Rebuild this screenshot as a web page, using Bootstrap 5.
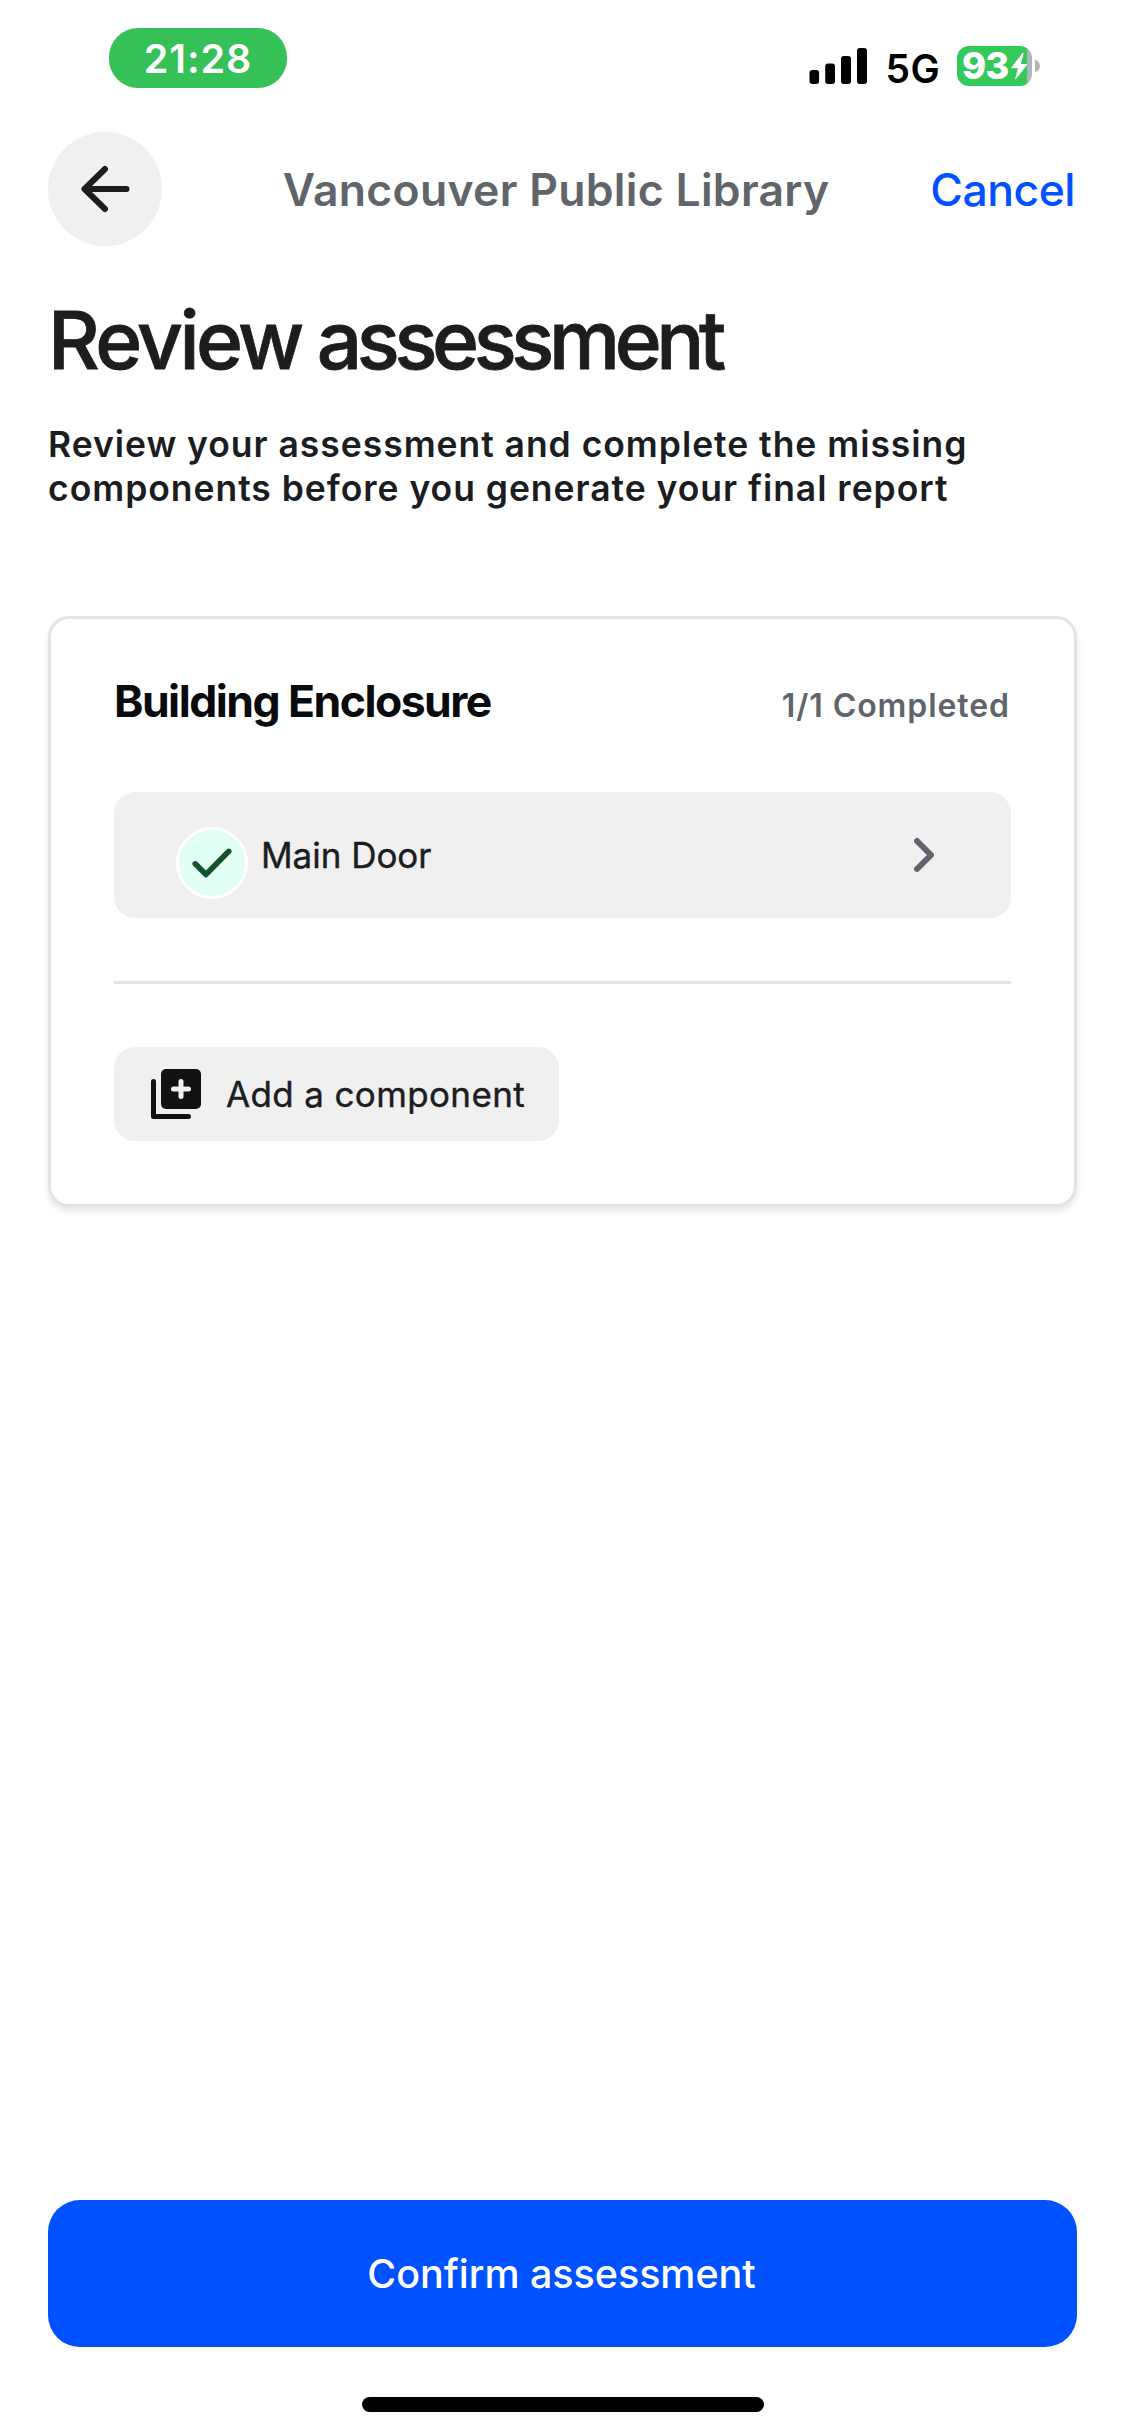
<!DOCTYPE html>
<html lang="en">
<head>
<meta charset="utf-8">
<meta name="viewport" content="width=device-width, initial-scale=1">
<title>Review assessment</title>
<link href="https://cdn.jsdelivr.net/npm/bootstrap@5.3.0/dist/css/bootstrap.min.css" rel="stylesheet">
<style>
  body { font-family: Inter, "Liberation Sans", sans-serif; color: #1b1d1f; background: #fff; font-size: 35px; }
  svg { display: block; flex: none; }
  .screen { width: 1125px; height: 2436px; padding: 0 48px; overflow: hidden; }

  .status-bar { height: 132px; padding: 28px 37px 0 61px; }
  .time-pill { width: 178px; height: 60px; border-radius: 29px; background: #35c058; color: #fff;
    font-size: 39.5px; font-weight: 600; letter-spacing: .9px; line-height: 62px; }
  .signals { height: 40px; margin-top: 18px; }
  .network { font-size: 39px; font-weight: 600; letter-spacing: .4px; line-height: 40px; color: #000; margin: 3px 17px 0 18px; }
  .battery { width: 75px; height: 40px; border-radius: 12px;
    background: linear-gradient(90deg, #34c95b 70px, #b4b4b6 70px); padding-left: 5px; }
  .battery-level { font-size: 36.5px; font-weight: 800; letter-spacing: -1px; line-height: 41px; color: #fff; width: 48px; }

  .top-bar { height: 114px; }
  .back-btn, .back-btn:hover { width: 114px; height: 114px; background: #f0f0f0; }
  .place { font-size: 44.5px; font-weight: 600; letter-spacing: .3px; line-height: 60px; color: #5f656b; margin: 1px 0 0 20px; }
  .cancel-link { font-size: 44.5px; font-weight: 500; letter-spacing: -.5px; line-height: 60px; color: #0051ff; margin: 1px 2px 0 0; }

  .page-title { font-size: 80px; font-weight: 500; letter-spacing: -5.4px; line-height: 96px; margin: 46px 0 0 0; -webkit-text-stroke: .8px #1b1d1f; }
  .page-title span { letter-spacing: -3.6px; }
  .intro { font-size: 35.5px; font-weight: 600; letter-spacing: .96px; line-height: 44px; margin: 35px 0 0 0; }

  .group-card { margin-top: 105px; height: 591px; border: 3px solid #e3e3e6; border-radius: 21px;
    padding: 54px 63px 0; box-shadow: 0 4px 6px rgba(0,0,0,.1); }
  .group-name { font-size: 44.5px; font-weight: 700; letter-spacing: -1.52px; line-height: 56px; color: #090a0b; }
  .group-count { font-size: 32px; font-weight: 600; letter-spacing: .92px; line-height: 40px; color: #5f656b; padding: 13px 1px 0 0; }
  .component-item { height: 126px; margin-top: 63px; border-radius: 21px; background: #f0f0f0; padding: 0 77px 0 62px; }
  .check-dot { width: 72px; height: 72px; border: 3px solid #fff; background: #e1fff4; margin-top: 16px; }
  .component-name { letter-spacing: -.02px; line-height: 44px; margin-left: 13px; -webkit-text-stroke: .4px #1b1d1f; }
  .rule { height: 3px; background: #e3e3e4; margin: 63px 0; }
  .add-btn, .add-btn:hover { width: 445px; height: 94px; border: 0; border-radius: 21px; background: #f0f0f0; color: #1b1d1f;
    font-size: 35px; letter-spacing: .36px; line-height: 44px; padding: 0 0 0 32px; -webkit-text-stroke: .4px #1b1d1f; }

  .confirm-btn, .confirm-btn:hover { height: 147px; border: 0; border-radius: 32px; background: #0051ff; color: #fff;
    font-size: 39.5px; font-weight: 500; letter-spacing: -.05px; padding: 2px 2px 0 0; }
  .home-bar { width: 402px; height: 15px; border-radius: 8px; background: #000; margin: 50px auto 24px; }
</style>
</head>
<body>
<div class="screen d-flex flex-column mx-auto">
  <div class="status-bar d-flex justify-content-between align-items-start">
    <div class="time-pill text-center">21:28</div>
    <div class="signals d-flex">
      <svg width="58" height="38" viewBox="0 0 58 38"><rect x="0.5" y="24" width="9.6" height="14" rx="3"/><rect x="16.2" y="17.5" width="9.8" height="20.5" rx="3"/><rect x="32" y="10" width="10" height="28" rx="3"/><rect x="48" y="2" width="10" height="36" rx="3"/></svg>
      <div class="network">5G</div>
      <div class="d-flex align-items-center">
        <div class="battery d-flex align-items-center">
          <div class="battery-level">93</div>
          <svg width="18" height="28" viewBox="0 0 18 28"><path d="M12.5 1 1.5 15.2q-.6 1 .6 1H8L5.2 26.6q0 1 .9.4L17 13q.6-1-.5-1H10.8L13.6 1.8Q13.6.4 12.500 1Z" fill="#fff"/></svg>
        </div>
        <svg width="8" height="14" viewBox="0 0 8 14"><path d="M3 0.500Q8 2.500 8 7T3 13.500Z" fill="#b4b4b6"/></svg>
      </div>
    </div>
  </div>

  <header class="top-bar d-flex align-items-center justify-content-between">
    <button class="back-btn btn rounded-circle border-0 p-0 d-flex align-items-center justify-content-center" aria-label="Back">
      <svg width="60" height="60" viewBox="0 0 60 60" fill="none" stroke="#1b1d1f" stroke-width="6" stroke-linecap="round" stroke-linejoin="round"><path d="M51.500 30H9.500M30 10 9.500 30 30 50"/></svg>
    </button>
    <div class="place">Vancouver Public Library</div>
    <a class="cancel-link text-decoration-none" href="#">Cancel</a>
  </header>

  <h1 class="page-title"><span>Review</span> assessment</h1>
  <p class="intro">Review your assessment and complete the missing<br>components before you generate your final report</p>

  <section class="card group-card">
    <div class="d-flex justify-content-between">
      <div class="group-name">Building Enclosure</div>
      <div class="group-count">1/1 Completed</div>
    </div>
    <div class="component-item d-flex align-items-center">
      <div class="check-dot rounded-circle d-flex align-items-center justify-content-center">
        <svg width="44" height="44" viewBox="0 0 44 44" fill="none" stroke="#15532e" stroke-width="5.500" stroke-linecap="round" stroke-linejoin="round"><path d="M5.200 22.800 15.900 33.500 38.800 10.300"/></svg>
      </div>
      <div class="component-name">Main Door</div>
      <svg class="ms-auto" width="20" height="36" viewBox="0 0 20 36" fill="none" stroke="#5f656b" stroke-width="6" stroke-linecap="round" stroke-linejoin="round"><path d="M3 4 17 18 3 32"/></svg>
    </div>
    <div class="rule"></div>
    <button class="add-btn btn d-flex align-items-center">
      <svg width="60" height="60" viewBox="0 0 24 24" fill="none" stroke-width="2" stroke-linecap="round" stroke-linejoin="round"><path d="M3 7V21H17" stroke="#111214"/><rect x="6" y="2" width="16" height="16" rx="2" fill="#111214"/><path d="M14 7v6M11 10h6" stroke="#f0f0f0"/></svg>
      <span class="ms-3 ps-1">Add a component</span>
    </button>
  </section>

  <div class="mt-auto">
    <button class="confirm-btn btn w-100">Confirm assessment</button>
    <div class="home-bar"></div>
  </div>
</div>
<script src="https://cdn.jsdelivr.net/npm/bootstrap@5.3.0/dist/js/bootstrap.bundle.min.js"></script>
</body>
</html>
